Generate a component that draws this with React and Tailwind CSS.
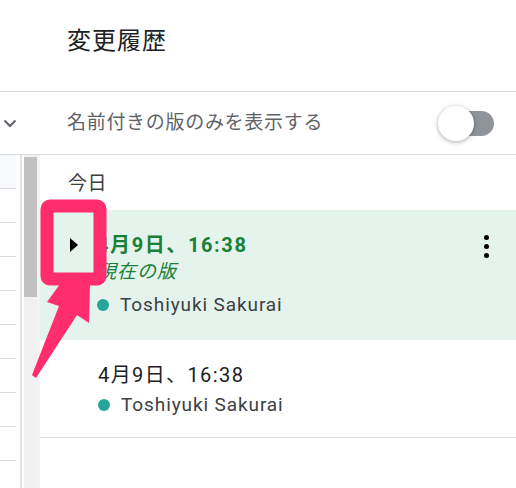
const font = { fontFamily: 'Roboto, "Noto Sans CJK JP", sans-serif' }

function Triangle() {
  return <svg width="8" height="14" viewBox="0 0 8 14"><path d="M0 0 L8 7 L0 14 Z" fill="#000" /></svg>
}

function Kebab() {
  return <div className="flex flex-col items-center gap-[4px]">
    <span className="block h-[5px] w-[5px] rounded-full bg-black" />
    <span className="block h-[5px] w-[5px] rounded-full bg-black" />
    <span className="block h-[5px] w-[5px] rounded-full bg-black" />
  </div>
}

function Author() {
  return <div className="flex items-center gap-[11px]">
    <span className="block h-[12px] w-[12px] rounded-full bg-[#26a69a]" />
    <span className="text-[19px] leading-[24px] tracking-[0.9px] text-[#3c4043]">Toshiyuki Sakurai</span>
  </div>
}

function SheetStrip() {
  const rows = [190, 225, 259, 293, 327, 361, 395, 428, 463]
  return <div className="flex h-full w-[40px] shrink-0 flex-col">
    <div className="h-[92px] border-b border-[#dadce0] bg-white" />
    <div className="flex h-[63px] items-center border-b border-[#dadce0] pl-[3px]">
      <svg width="14" height="9" viewBox="0 0 14 9"><path d="M1.5 1.5 L7 7 L12.5 1.5" fill="none" stroke="#5f6368" strokeWidth="2" /></svg>
    </div>
    <div className="flex flex-1">
      <div className="flex w-[16px] flex-col">
        <div className="h-[34px] border-b border-[#dadce0] bg-[#f8f9fa]" />
        {rows.slice(1).map((r) => <div key={r} className="h-[34px] border-b border-[#dadce0]" />)}
      </div>
      <div className="w-[4px]" />
      <div className="w-[2px] bg-[#e2e3e5]" />
      <div className="ml-[2px] flex w-[13px] flex-col bg-[#f1f1f1]">
        <div className="mt-[2px] h-[140px] bg-[#c1c1c1]" />
      </div>
      <div className="w-[3px] bg-[#f3f3f3]" />
    </div>
  </div>
}

export default function App() {
  return <div className="relative flex h-[488px] w-[516px] overflow-hidden bg-white" style={font}>
    <SheetStrip />
    <div className="flex h-full flex-1 flex-col">
      <div className="flex h-[92px] items-center border-b border-[#dadce0] pb-[9px] pl-[27px]">
        <h1 className="text-[24px] font-normal tracking-[1px] text-[#202124]">変更履歴</h1>
      </div>
      <div className="flex h-[63px] items-center justify-between border-b border-[#dadce0] pl-[27px] pr-[22px]">
        <span className="text-[19px] tracking-[0.7px] text-[#5f6368]">名前付きの版のみを表示する</span>
        <div className="relative h-[25px] w-[40px] rounded-full bg-[#8f949b]">
          <span className="absolute left-[-16px] top-[-5px] block h-[35px] w-[36px] rounded-full bg-white shadow-[0_1px_4px_rgba(0,0,0,0.35)]" />
        </div>
      </div>
      <div className="flex h-[55px] items-center pl-[28px] pt-[3px]">
        <span className="text-[19px] tracking-[0.5px] text-[#3c4043]">今日</span>
      </div>
      <div className="flex h-[130px] bg-[#e4f3eb] pl-[30px] pr-[27px] pt-[23px]">
        <div className="flex h-[24px] w-[27px] items-center"><Triangle /></div>
        <div className="flex flex-1 flex-col">
          <span className="text-[20px] font-bold leading-[24px] tracking-[1.6px] text-[#188038]">4月9日、16:38</span>
          <span className="mt-[3px] text-[19px] italic leading-[24px] tracking-[1px] text-[#188038]">現在の版</span>
          <div className="mt-[9px]"><Author /></div>
        </div>
        <div className="pt-[2px]"><Kebab /></div>
      </div>
      <div className="flex h-[98px] flex-col border-b border-[#dadce0] pl-[58px] pt-[23px]">
        <span className="text-[20px] leading-[24px] tracking-[1.4px] text-[#202124]">4月9日、16:38</span>
        <div className="mt-[6px]"><Author /></div>
      </div>
    </div>
    <svg className="pointer-events-none absolute left-0 top-0" width="516" height="488">
      <rect x="47" y="206" width="53" height="73" rx="3" fill="none" stroke="#ff2d6e" strokeWidth="13" />
      <polygon points="60,284 90,284 89,323 77,315 36,378 32,375 59,306 47,302" fill="#ff2d6e" />
    </svg>
  </div>
}
